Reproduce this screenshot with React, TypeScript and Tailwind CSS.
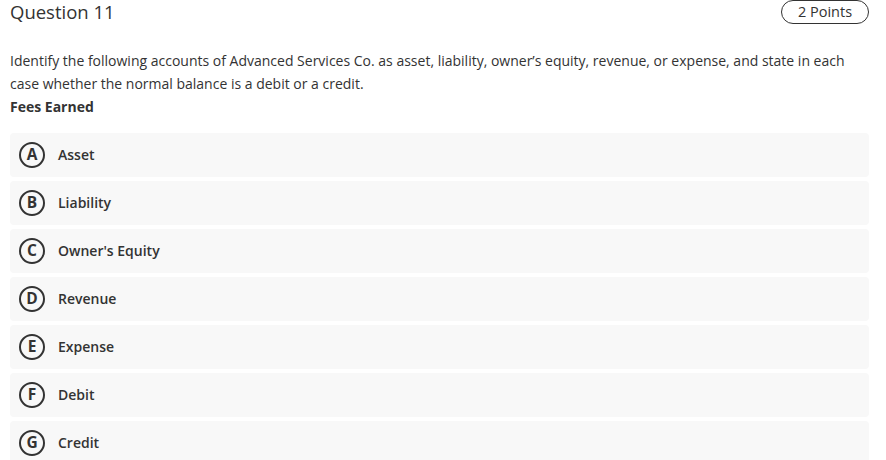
import React from "react";

const options = [
  ["A", "Asset"],
  ["B", "Liability"],
  ["C", "Owner's Equity"],
  ["D", "Revenue"],
  ["E", "Expense"],
  ["F", "Debit"],
  ["G", "Credit"],
];

export default function App() {
  return (
    <div className="w-[886px] h-[460px] overflow-hidden bg-white text-[#333333] pl-[10px] pr-[17px]" style={{ fontFamily: '"Open Sans", sans-serif' }}>
      <div className="flex items-start justify-between h-[24px]">
        <div className="text-[18.5px] leading-[24px] mt-[0px]">Question 11</div>
        <div className="mt-[0px] h-[24px] w-[88px] flex items-center justify-center rounded-full border border-[#333333] text-[14.5px]">2 Points</div>
      </div>
      <div className="mt-[25px] text-[14px] leading-[23px]">
        Identify the following accounts of Advanced Services Co. as asset, liability, owner’s equity, revenue, or expense, and state in each case whether the normal balance is a debit or a credit.
      </div>
      <div className="text-[14px] leading-[23px] font-bold">Fees Earned</div>
      <div className="mt-[15px] flex flex-col gap-[4px]">
        {options.map(([l, t]) => (
          <div key={l} className="h-[44px] shrink-0 rounded-[4px] bg-[#f8f8f8] flex items-center pl-[9px]">
            <div className="w-[26px] h-[26px] rounded-full border-2 border-[#333333] flex items-center justify-center text-[15.5px] font-bold leading-none">{l}</div>
            <div className="ml-[13px] text-[14px] font-semibold leading-[20px] mb-[1px]">{t}</div>
          </div>
        ))}
      </div>
    </div>
  );
}
